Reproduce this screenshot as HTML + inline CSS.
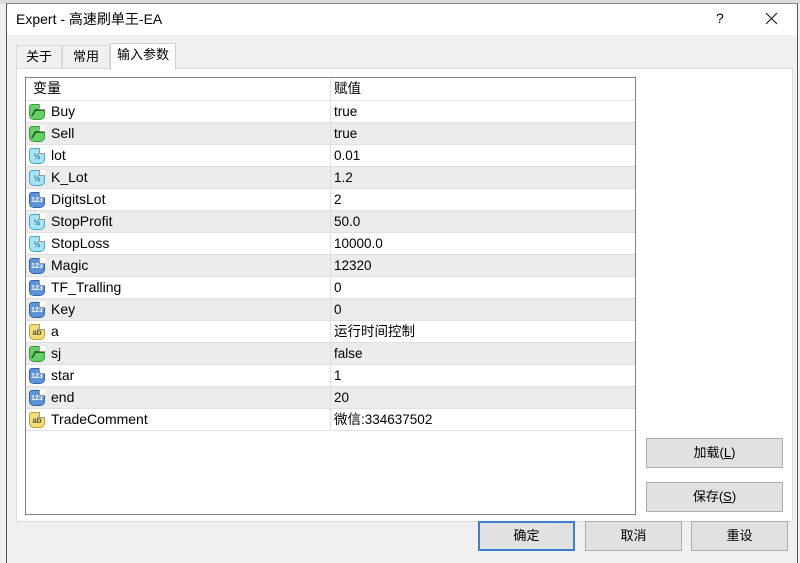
<!DOCTYPE html>
<html><head><meta charset="utf-8"><style>
*{margin:0;padding:0;box-sizing:border-box}
body{width:800px;height:558px;position:relative;overflow:hidden;background:#f0f0f0;font-family:"Liberation Sans","Noto Sans CJK SC",sans-serif;font-size:14px;color:#000}
.abs{position:absolute}
.top{left:0;top:0;width:800px;height:4px;background:#dcdcdc}
.win{left:6px;top:3px;width:792px;height:560px;border-left:1px solid #555;border-right:1px solid #555;border-top:1px solid #888;background:#f0f0f0}
.title{left:7px;top:4px;width:790px;height:31px;background:#fff}
.tab{top:45px;height:23px;border:1px solid #d9d9d9;border-bottom:none;background:#f0f0f0;text-align:center;line-height:22px;font-size:13px}
.panel{left:16px;top:68px;width:777px;height:454px;background:#fff;border:1px solid #dadada}
.grid{left:25px;top:77px;width:611px;height:438px;border:1px solid #828282;background:#fff}
.row{position:absolute;left:0;width:609px;height:22px;border-bottom:1px solid #e0e0e0;line-height:21px}
.row.g{background:#ececec}
.row .n{position:absolute;left:25px}
.row .v{position:absolute;left:308px;font-size:13.5px}
.row .d{position:absolute;left:304px;top:0;width:1px;height:22px;background:#e0e0e0}
.ic{position:absolute;left:3px;top:3px;width:16px;height:16px;border-radius:3px 3px 5px 5px;font-size:8px;font-weight:bold;text-align:center;line-height:15px}
.ic:after{content:"";position:absolute;right:-1px;top:-1px;width:5px;height:5px;background:#fff;border-left:1px solid #999;border-bottom:1px solid #999}
.b{background:#66d066;border:1px solid #3a9a3a}
.b:before{content:"";position:absolute;left:3px;top:4px;width:8px;height:5px;border-top:2px solid #1f6a1f;border-left:2px solid #1f6a1f;transform:skewX(-30deg)}
.f{background:#a8e4f4;border:1px solid #45a8c8;color:#2a6a9a}
.i{background:#5f93d8;border:1px solid #2f62a8;color:#fff;font-size:7px}
.s{background:#f2dc78;border:1px solid #c0a030;color:#553}
.btn{height:30px;background:#e1e1e1;border:1px solid #adadad;text-align:center;line-height:28px;font-size:13px}
</style></head><body>
<div class="abs top"></div>
<div class="abs win"></div>
<div class="abs title"></div>
<div class="abs" style="left:16px;top:9px;font-size:14px">Expert - 高速刷单王-EA</div>
<div class="abs" style="left:716px;top:10px;font-size:14px">?</div>
<svg class="abs" style="left:765px;top:12px" width="13" height="13"><path d="M1 1L12 12M12 1L1 12" stroke="#222" stroke-width="1.2"/></svg>
<div class="abs tab" style="left:16px;width:46px">关于</div>
<div class="abs tab" style="left:62px;width:48px">常用</div>
<div class="abs panel"></div>
<div class="abs tab" style="left:110px;top:43px;width:66px;height:27px;background:#fff;border-color:#d0d0d0">输入参数</div>
<div class="abs grid">
<div class="row" style="top:0;height:23px"><span class="n" style="left:7px">变量</span><span class="v">赋值</span><span class="d"></span></div>
<div class="row" style="top:23px"><span class="ic b"></span><span class="n">Buy</span><span class="d"></span><span class="v">true</span></div>
<div class="row g" style="top:45px"><span class="ic b"></span><span class="n">Sell</span><span class="d"></span><span class="v">true</span></div>
<div class="row" style="top:67px"><span class="ic f">½</span><span class="n">lot</span><span class="d"></span><span class="v">0.01</span></div>
<div class="row g" style="top:89px"><span class="ic f">½</span><span class="n">K_Lot</span><span class="d"></span><span class="v">1.2</span></div>
<div class="row" style="top:111px"><span class="ic i">123</span><span class="n">DigitsLot</span><span class="d"></span><span class="v">2</span></div>
<div class="row g" style="top:133px"><span class="ic f">½</span><span class="n">StopProfit</span><span class="d"></span><span class="v">50.0</span></div>
<div class="row" style="top:155px"><span class="ic f">½</span><span class="n">StopLoss</span><span class="d"></span><span class="v">10000.0</span></div>
<div class="row g" style="top:177px"><span class="ic i">123</span><span class="n">Magic</span><span class="d"></span><span class="v">12320</span></div>
<div class="row" style="top:199px"><span class="ic i">123</span><span class="n">TF_Tralling</span><span class="d"></span><span class="v">0</span></div>
<div class="row g" style="top:221px"><span class="ic i">123</span><span class="n">Key</span><span class="d"></span><span class="v">0</span></div>
<div class="row" style="top:243px"><span class="ic s">ab</span><span class="n">a</span><span class="d"></span><span class="v">运行时间控制</span></div>
<div class="row g" style="top:265px"><span class="ic b"></span><span class="n">sj</span><span class="d"></span><span class="v">false</span></div>
<div class="row" style="top:287px"><span class="ic i">123</span><span class="n">star</span><span class="d"></span><span class="v">1</span></div>
<div class="row g" style="top:309px"><span class="ic i">123</span><span class="n">end</span><span class="d"></span><span class="v">20</span></div>
<div class="row" style="top:331px"><span class="ic s">ab</span><span class="n">TradeComment</span><span class="d"></span><span class="v">微信:334637502</span></div>
</div>
<div class="abs btn" style="left:646px;top:438px;width:137px">加载(<u>L</u>)</div>
<div class="abs btn" style="left:646px;top:482px;width:137px">保存(<u>S</u>)</div>
<div class="abs btn" style="left:478px;top:521px;width:97px;border:2px solid #3b7fd0;line-height:26px">确定</div>
<div class="abs btn" style="left:585px;top:521px;width:97px">取消</div>
<div class="abs btn" style="left:691px;top:521px;width:97px">重设</div>
</body></html>
